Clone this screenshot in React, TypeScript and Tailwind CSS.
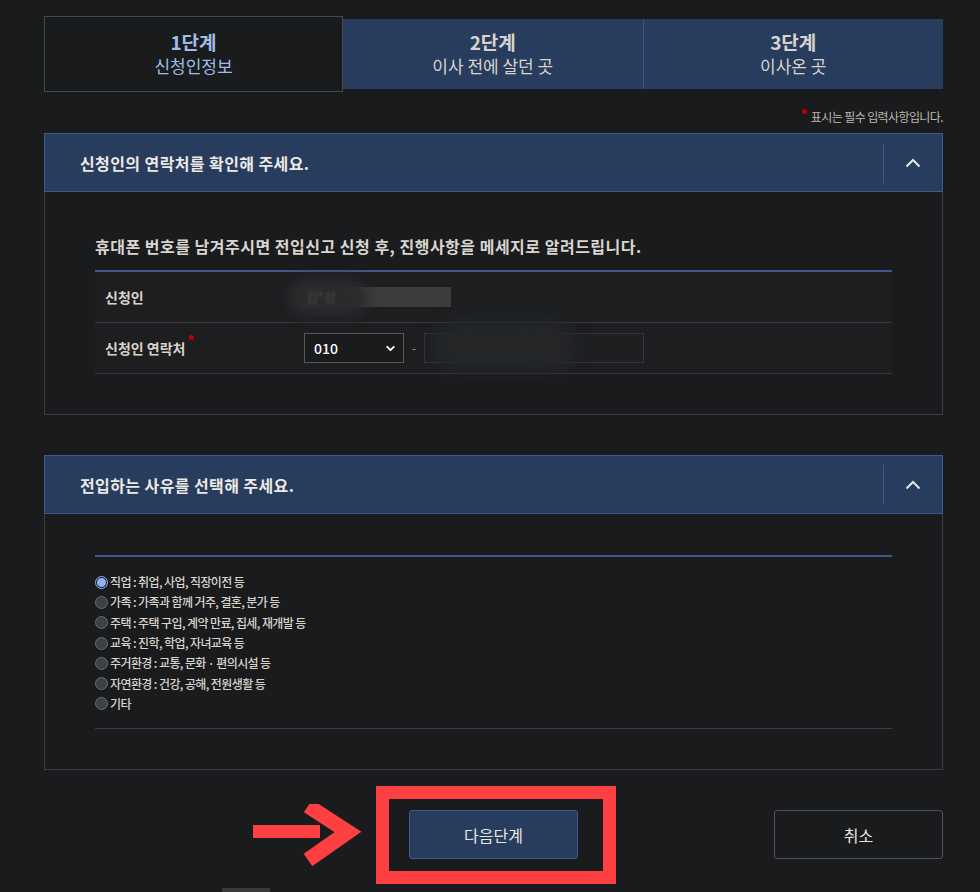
import { ChevronDown } from "lucide-react";

const reasons = [
  "직업 : 취업, 사업, 직장이전 등",
  "가족 : 가족과 함께 거주, 결혼, 분가 등",
  "주택 : 주택 구입, 계약 만료, 집세, 재개발 등",
  "교육 : 진학, 학업, 자녀교육 등",
  "주거환경 : 교통, 문화 · 편의시설 등",
  "자연환경 : 건강, 공해, 전원생활 등",
  "기타",
];

const SectionHeader = ({ title }: { title: string }) => (
  <div className="flex h-[59px] items-center border border-[#3e5a8a] bg-[#283c5e]">
    <h2 className="flex-1 pl-[35px] text-[16px] font-bold tracking-[0.4px] text-[#ece9e4]">{title}</h2>
    <div className="h-[40px] w-px bg-[#3e5a8a]" />
    <div className="flex w-[58px] items-center justify-center">
      <svg width="16" height="10" viewBox="0 0 16 10" fill="none">
        <path d="M1.5 8.5 8 2l6.5 6.5" stroke="#e8e6e3" strokeWidth="2" />
      </svg>
    </div>
  </div>
);

const Step = ({ num, label, active }: { num: string; label: string; active?: boolean }) => (
  <div className="flex flex-1 flex-col items-center justify-center">
    <span className={`block h-[24px] text-[19px] leading-[24px] font-bold ${active ? "text-[#9fbde8]" : "text-[#d8d4cd]"}`}>
      {num}
    </span>
    <span className={`block h-[24px] text-[17px] leading-[24px] ${active ? "text-[#9fbde8]" : "text-[#d8d4cd]"}`}>
      {label}
    </span>
  </div>
);

const Radio = ({ checked }: { checked?: boolean }) =>
  checked ? (
    <span className="flex h-[13px] w-[13px] items-center justify-center rounded-full border border-[#8fb4ef] bg-[#1b1c1e]">
      <span className="h-[9px] w-[9px] rounded-full bg-[#8fb4ef]" />
    </span>
  ) : (
    <span className="h-[13px] w-[13px] rounded-full border border-[#6b6b6b] bg-[#3f4042]" />
  );

export default function App() {
  return (
    <div
      className="min-h-[892px] overflow-hidden bg-[#1a1b1d] pt-[16px] text-[#e8e6e3]"
      style={{ fontFamily: '"Noto Sans CJK KR", "Noto Sans", sans-serif' }}
    >
      <div className="ml-[44px] w-[899px]">
        {/* steps */}
        <div className="flex h-[76px] items-center">
          <div className="flex h-[76px] w-[299px] border border-[#474a4d]">
            <Step num="1단계" label="신청인정보" active />
          </div>
          <div className="flex h-[70px] flex-1 bg-[#283c5e]">
            <Step num="2단계" label="이사 전에 살던 곳" />
            <div className="w-px bg-[#3e5680]" />
            <Step num="3단계" label="이사온 곳" />
          </div>
        </div>

        <div className="mt-[14px] flex h-[27px] items-start justify-end">
          <span className="mt-[3px] mr-[4px] h-[5px] w-[5px] rounded-full bg-[#c00000]" />
          <span className="mt-[2px] text-[12px] tracking-[-0.6px] text-[#bdb8b0]">표시는 필수 입력사항입니다.</span>
        </div>

        {/* section 1 */}
        <SectionHeader title="신청인의 연락처를 확인해 주세요." />
        <div className="border border-t-0 border-[#3a3c3f] px-[50px] pt-[42px] pb-[40px]">
          <p className="pb-[12px] text-[16px] font-bold tracking-[0.5px] text-[#d9d5cf]">
            휴대폰 번호를 남겨주시면 전입신고 신청 후, 진행사항을 메세지로 알려드립니다.
          </p>
          <div className="border-t-2 border-[#3e5a8a]">
            <div className="flex h-[51px] items-center border-b border-[#36383b] bg-[#1c1e20]">
              <span className="w-[209px] pl-[10px] text-[14px] font-bold text-[#d8d4cd]">신청인</span>
              <div className="relative flex h-[20px] w-[147px] items-center bg-[#3c3c3c]">
                <span className="absolute left-[-16px] top-[-8px] h-[36px] w-[80px] rounded-full bg-[#2a2b2d] blur-[6px]" />
                <span className="relative pl-[2px] text-[13px] text-[#4b4b4b] blur-[1px]">김*성</span>
              </div>
            </div>
            <div className="flex h-[51px] items-center border-b border-[#36383b] bg-[#1c1e20]">
              <span className="relative w-[209px] pl-[10px] text-[14px] font-bold text-[#d8d4cd]">
                신청인 연락처
                <span className="absolute left-[94px] top-[-3px] h-[5px] w-[5px] rounded-full bg-[#c00000]" />
              </span>
              <div className="flex h-[30px] w-[100px] items-center justify-between border border-[#555759] bg-[#1a1b1d] pl-[9px] pr-[6px]">
                <span className="text-[14px] font-medium text-white">010</span>
                <ChevronDown size={13} strokeWidth={3.5} className="text-white" />
              </div>
              <span className="mx-[8px] text-[12px] text-[#9a9a9a]">-</span>
              <div className="relative h-[30px] w-[100px] border border-[#333538] bg-[#1d1f21]">
                <span className="absolute left-[10px] top-[-14px] h-[52px] w-[140px] rounded-full bg-[#242628] blur-[8px]" />
              </div>
              <div className="ml-[20px] h-[30px] w-[100px] border border-[#333538] bg-[#1d1f21]" />
            </div>
          </div>
        </div>

        {/* section 2 */}
        <div className="mt-[40px]">
          <SectionHeader title="전입하는 사유를 선택해 주세요." />
          <div className="border border-t-0 border-[#3a3c3f] px-[50px] pt-[41px] pb-[40px]">
            <div className="border-t-2 border-b border-t-[#3e5a8a] border-b-[#3a3c3f] pt-[15px] pb-[14px]">
              {reasons.map((r, i) => (
                <label key={r} className="flex h-[20.3px] items-center gap-[2px]">
                  <Radio checked={i === 0} />
                  <span className="text-[12px] font-medium tracking-[-0.6px] text-[#d8d4cd]">{r}</span>
                </label>
              ))}
            </div>
          </div>
        </div>

        {/* buttons */}
        <div className="mt-[40px] grid grid-cols-3 items-center">
          <div />
          <div className="relative justify-self-center">
            <svg
              className="absolute left-[-157px] top-[-6px]"
              width="110"
              height="62"
              viewBox="0 0 110 62"
              fill="none"
            >
              <path d="M1 27.5H68" stroke="#ff4040" strokeWidth="13" />
              <path d="M56 2 L96 28 L56 56" stroke="#ff4040" strokeWidth="15" strokeLinejoin="miter" />
            </svg>
            <div className="pointer-events-none absolute left-[-33px] top-[-24px] h-[98px] w-[240px] border-[13px] border-[#ff4040]" />
            <button className="h-[49px] w-[169px] rounded-[3px] border border-[#3e5a8a] bg-[#283c5e] text-[16px] text-[#e8e6e3]">
              다음단계
            </button>
          </div>
          <button className="h-[49px] w-[169px] justify-self-end rounded-[3px] border border-[#4f5255] text-[16px] text-[#e8e6e3]">
            취소
          </button>
        </div>
        <div className="ml-[178px] mt-[29px] h-[6px] w-[48px] bg-[#3a3a3a]" />
      </div>
    </div>
  );
}
